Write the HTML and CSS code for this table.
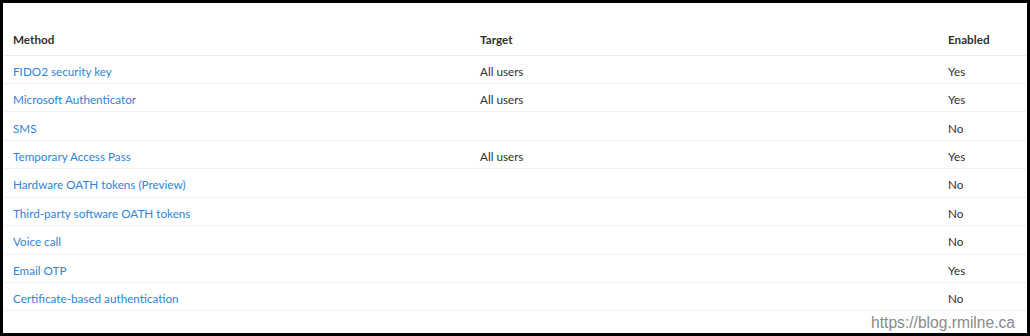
FILE: index.html
```html
<!DOCTYPE html>
<html>
<head>
<meta charset="utf-8">
<link rel="stylesheet" href="styles.css">
</head>
<body>
<div class="frame">
  <div class="panel">
    <table class="grid">
      <thead>
        <tr>
          <th class="c-method">Method</th>
          <th class="c-target">Target</th>
          <th class="c-enabled">Enabled</th>
        </tr>
      </thead>
      <tbody>
        <tr><td><a class="link">FIDO2 security key</a></td><td>All users</td><td>Yes</td></tr>
        <tr><td><a class="link">Microsoft Authenticator</a></td><td>All users</td><td>Yes</td></tr>
        <tr><td><a class="link">SMS</a></td><td></td><td>No</td></tr>
        <tr><td><a class="link">Temporary Access Pass</a></td><td>All users</td><td>Yes</td></tr>
        <tr><td><a class="link">Hardware OATH tokens (Preview)</a></td><td></td><td>No</td></tr>
        <tr><td><a class="link">Third-party software OATH tokens</a></td><td></td><td>No</td></tr>
        <tr><td><a class="link">Voice call</a></td><td></td><td>No</td></tr>
        <tr><td><a class="link">Email OTP</a></td><td></td><td>Yes</td></tr>
        <tr><td><a class="link">Certificate-based authentication</a></td><td></td><td>No</td></tr>
      </tbody>
    </table>
    <div class="watermark">https://blog.rmilne.ca</div>
  </div>
</div>
</body>
</html>
```

FILE: styles.css
```css
html, body {
  margin: 0;
  padding: 0;
  background: #000;
}
.frame {
  width: 1030px;
  height: 336px;
  box-sizing: border-box;
  border: 3px solid #000;
  background: #000;
}
.panel {
  position: relative;
  height: 100%;
  background: #fff;
  padding-top: 24px;
  box-sizing: border-box;
  font-family: "Lato", "Noto Sans", sans-serif;
  font-size: 11.7px;
  color: #323130;
}
.grid {
  width: 100%;
  border-collapse: collapse;
  table-layout: fixed;
}
.grid th {
  text-align: left;
  font-weight: 700;
  height: 28px;
  box-sizing: border-box;
  padding: 0 0 3px 10px;
  border-bottom: 1px solid #ebebeb;
}
.grid td {
  height: 28.44px;
  box-sizing: border-box;
  padding: 3px 0 0 10px;
  border-bottom: 1px solid #f0f0f0;
  white-space: nowrap;
}
.c-method { width: 467px; }
.c-target { width: 468px; }
.link {
  color: #2f84d6;
  text-decoration: none;
}
.watermark {
  position: absolute;
  right: 12px;
  bottom: 1px;
  font-family: "Liberation Sans", Arial, sans-serif;
  font-size: 15.6px;
  color: #8a8a8a;
  background: #fff;
}
```
